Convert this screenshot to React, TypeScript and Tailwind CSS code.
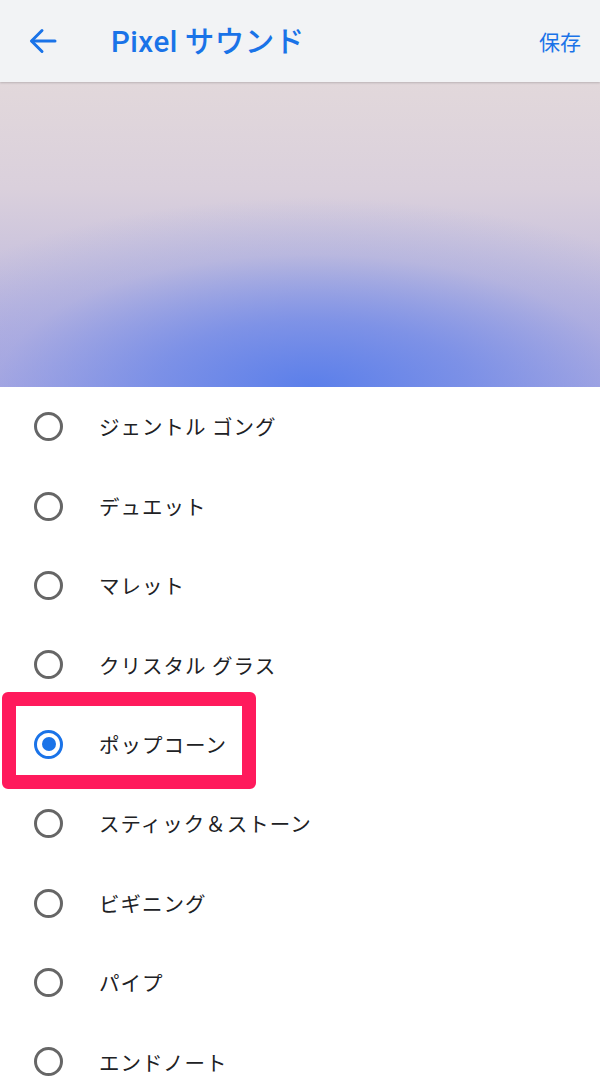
import React from 'react';

const sounds = [
  'ジェントル ゴング',
  'デュエット',
  'マレット',
  'クリスタル グラス',
  'ポップコーン',
  'スティック＆ストーン',
  'ビギニング',
  'パイプ',
  'エンドノート',
];

const SELECTED = 'ポップコーン';

const Radio = ({ checked }: { checked: boolean }) =>
  checked ? (
    <span className="flex h-[29px] w-[29px] items-center justify-center rounded-full border-[3.5px] border-[#1a73e8]">
      <span className="h-[14px] w-[14px] rounded-full bg-[#1a73e8]" />
    </span>
  ) : (
    <span className="block h-[29px] w-[29px] rounded-full border-[3px] border-[#666666]" />
  );

export default function App() {
  return (
    <div
      className="flex h-[1089px] w-[600px] flex-col overflow-hidden bg-white"
      style={{ fontFamily: '"Noto Sans CJK JP", Roboto, sans-serif' }}
    >
      {/* app bar */}
      <header className="relative z-10 flex h-[82px] shrink-0 items-center bg-[#f2f3f5] shadow-[0_1px_2px_rgba(0,0,0,0.18)]">
        <button className="ml-[29px] flex h-[26px] w-[28px] items-center justify-center text-[#1a73e8]">
          <svg width="28" height="26" viewBox="0 0 28 26" fill="none" stroke="currentColor" strokeWidth="3" strokeLinecap="round" strokeLinejoin="round">
            <path d="M26 13H3" />
            <path d="M13 2.5L2.5 13L13 23.5" />
          </svg>
        </button>
        <h1 className="ml-[54px] text-[29.5px] leading-none font-medium tracking-[0.5px] text-[#1a73e8]">
          <span style={{ fontFamily: 'Roboto, sans-serif' }}>Pixel</span> サウンド
        </h1>
        <button className="ml-auto mr-[19px] text-[21px] leading-none text-[#1a73e8]">保存</button>
      </header>

      {/* preview banner */}
      <div className="h-[305px] shrink-0 bg-[radial-gradient(ellipse_75%_62%_at_52%_100%,rgba(91,127,234,1)_0%,rgba(112,138,232,0.8)_35%,rgba(150,160,226,0.35)_70%,rgba(170,170,224,0)_100%),linear-gradient(to_bottom,#e2d8db_0%,#dad0dc_35%,#c9c2dd_60%,#b6b2e0_82%,#a9a8e2_100%)]" />

      {/* list */}
      <ul className="flex flex-col">
        {sounds.map((name) => {
          const checked = name === SELECTED;
          return (
            <li key={name} className="relative flex h-[79.4px] shrink-0 items-center">
              {checked && (
                <span className="pointer-events-none absolute left-[2px] top-[-13px] h-[97px] w-[254px] rounded-[6px] border-[14px] border-[#ff1a5c]" />
              )}
              <span className="ml-[34px]">
                <Radio checked={checked} />
              </span>
              <span className="ml-[36px] text-[20.5px] leading-none tracking-[1px] text-[#202124]">{name}</span>
            </li>
          );
        })}
      </ul>
    </div>
  );
}
